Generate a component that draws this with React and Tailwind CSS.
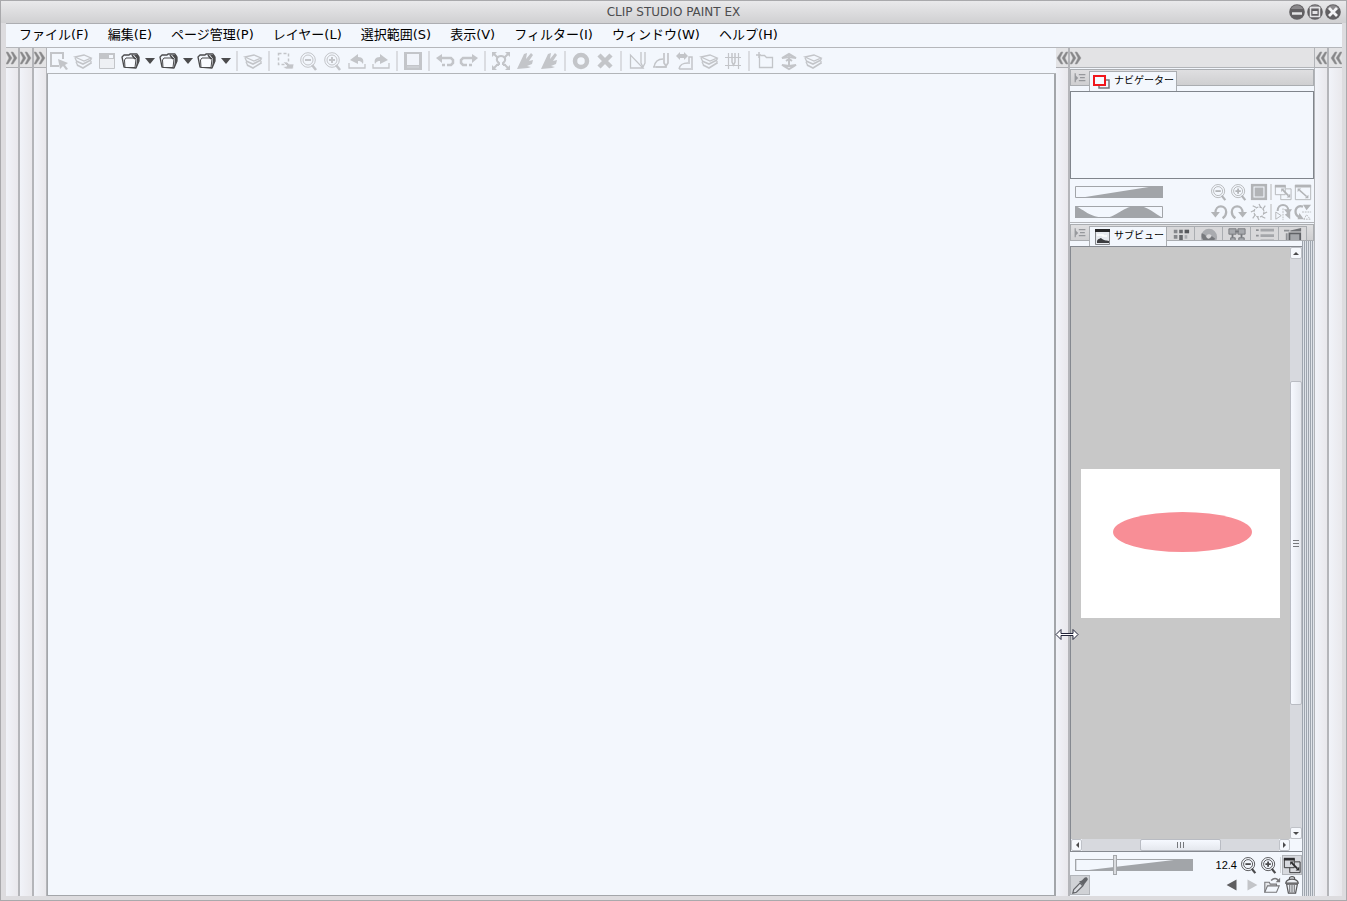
import { useState } from 'react'

const MENUS = [
  'ファイル(F)', '編集(E)', 'ページ管理(P)', 'レイヤー(L)', '選択範囲(S)',
  '表示(V)', 'フィルター(I)', 'ウィンドウ(W)', 'ヘルプ(H)',
]

const TOOLBAR = [
  'select', 'layers', 'window', 'folder*', 'folder*', 'folder*', '|',
  'layers', '|',
  'marquee', 'zoomOut', 'zoomIn', 'rotL', 'rotR', '|',
  'fit', '|',
  'undo', 'redo', '|',
  'transform', 'brush', 'brush', '|',
  'ring', 'cross', '|',
  'ruler', 'curve', 'curveSwap', 'layers', 'grid', '|',
  'newFolder', 'upDown', 'layers',
]

// 20x20 drawings, coloured through currentColor
const ICONS = {
  select: <><path d="M10 15H2V2h12v6" fill="none" stroke="currentColor" strokeWidth="2" /><path d="M9 8l10 4-3 2 3 4-2 1-3-4-3 3z" fill="currentColor" /></>,
  layers: (
    <g fill="none" stroke="currentColor">
      <path d="M2 6l9-2 7 3-7 3z" strokeWidth="1.300" />
      <path d="M3 10l7 3 8-4M4 14l6 3 8-5" strokeWidth="1.600" />
      <path d="M2 7l2 4M3 11l2 4M18 7v2M18 10v3" strokeWidth="1.300" />
    </g>
  ),
  window: <><path d="M2.500 2.500h15v15h-15z" fill="#eef0f4" stroke="currentColor" /><path d="M2 2h16v6H2z" fill="currentColor" /><path d="M12 4h4v3h-4z" fill="#f3f7fd" /></>,
  folder: (
    <>
      <path d="M3 16L1 6l2-2h5l1-1h7l2 3v4l-3 7z" fill="#f3f7fd" stroke="currentColor" strokeWidth="1.300" strokeLinejoin="round" />
      <path d="M15 17l1-9-3-4h4l1 2v4z" fill="currentColor" />
      <path d="M4 16.500L3.500 9 5 7h9l1 1-1 8.500z" fill="#f9fbff" stroke="currentColor" strokeLinejoin="round" />
      <path d="M11 4l3 4" stroke="currentColor" strokeWidth="1.500" />
    </>
  ),
  marquee: <><path d="M3.500 2.500h10v11h-10z" fill="none" stroke="currentColor" strokeWidth="1.500" strokeDasharray="3 2" /><path d="M8 11h4l2 2h5l-1 5h-7l-3-2 4-1z" fill="currentColor" stroke="#f3f7fd" strokeWidth="0.700" /></>,
  zoomOut: <g fill="none" stroke="currentColor"><circle cx="9" cy="9" r="7.300" /><circle cx="9" cy="9" r="5" /><path d="M6 9h6" strokeWidth="2" /><path d="M13 14l4 5" strokeWidth="2.500" /></g>,
  zoomIn: <g fill="none" stroke="currentColor"><circle cx="9" cy="9" r="7.300" /><circle cx="9" cy="9" r="5" /><path d="M6 9h6M9 6v6" strokeWidth="2" /><path d="M13 14l4 5" strokeWidth="2.500" /></g>,
  rotL: <><path d="M2 12v5h16v-4" fill="none" stroke="currentColor" strokeWidth="1.300" /><path d="M3 9l8-6v3c5 0 6 3 5 7-2-3-3-3-5-3v3z" fill="currentColor" /></>,
  rotR: <><path d="M18 12v5H2v-4" fill="none" stroke="currentColor" strokeWidth="1.300" /><path d="M17 9L9 3v3c-5 0-6 3-5 7 2-3 3-3 5-3v3z" fill="currentColor" /></>,
  fit: <><path d="M1 1h18v18H1z" fill="currentColor" /><path d="M4 3h12v11H4z" fill="#f1f4fa" /><path d="M4 16h12" stroke="#d6d9de" /></>,
  undo: <><path d="M6 7h10l2 2v3l-2 2h-4M10 14H7" fill="none" stroke="currentColor" strokeWidth="2.500" /><path d="M7 3v9L1 7z" fill="currentColor" /></>,
  redo: <><path d="M14 7H4L2 9v3l2 2h4M10 14h3" fill="none" stroke="currentColor" strokeWidth="2.500" /><path d="M13 3v9l6-5z" fill="currentColor" /></>,
  transform: (
    <>
      <path d="M8 14H5M12 14h3M8 14v-2C4 9 6 5 10 5s6 4 2 7v2" fill="none" stroke="currentColor" strokeWidth="2" />
      <path d="M3 3l4 4M17 3l-4 4M3 17l4-4M17 17l-4-4" stroke="currentColor" strokeWidth="2" />
      <path d="M1 1h5L1 6zM19 1h-5l5 5zM1 19h5l-5-5zM19 19h-5l5-5z" fill="currentColor" />
    </>
  ),
  brush: <path d="M2 18L9 3l3-1-1 6 5-6 2 2-4 6 4-1-1 4-5 2 4 1-3 1z" fill="currentColor" />,
  ring: <circle cx="10" cy="10" r="6" fill="none" stroke="currentColor" strokeWidth="4.500" />,
  cross: <path d="M4 4l12 12M16 4L4 16" stroke="currentColor" strokeWidth="4.500" />,
  ruler: <g fill="none" stroke="currentColor" strokeWidth="1.300"><path d="M3.500 4v13H16z" /><path d="M14 1v11l2 4 2-4V1" /></g>,
  curve: <><path d="M3 16c1-6 4-8 9-8M2 16h14" fill="none" stroke="currentColor" strokeWidth="1.500" /><path d="M13 2v10l2 3 2-3V2M5 16h10" fill="none" stroke="currentColor" strokeWidth="1.700" /></>,
  curveSwap: <><path d="M1 5l4-4v2h4V1l4 4-4 4V7H5v2z" fill="currentColor" /><path d="M4 18c1-5 4-6 9-6M4 18h14M14 13V6h3v11" fill="none" stroke="currentColor" strokeWidth="1.500" /></>,
  grid: <g fill="none" stroke="currentColor" strokeWidth="1.200"><path d="M5.500 2v16M15.500 2v16M2 6.500h16M2 14.500h16" /><path d="M9 2v9l1.500 3L12 11V2" strokeWidth="1.500" /></g>,
  newFolder: <><path d="M4.500 4v12.500h13v-10h-6l-2-2h-4" fill="none" stroke="currentColor" strokeWidth="1.300" /><path d="M1 4h5M4 1v6" stroke="currentColor" strokeWidth="1.500" /></>,
  upDown: <g fill="none" stroke="currentColor"><path d="M3 7l7-4 7 4-7-1zM3 14l7 4 7-4-7 1z" strokeWidth="2" /><path d="M10 6v8M7 10l3-2 3 2" strokeWidth="2" /></g>,
  square: <><path d="M1 1h18v18H1z" fill="currentColor" /><path d="M4.500 4.500h11v11h-11z" fill="currentColor" stroke="#f3f7fd" strokeWidth="1.200" /></>,
  fitArea: <><path d="M1.500 3h11v10h-11z" fill="none" stroke="currentColor" /><path d="M13 6.500h6v12H7.500V13" fill="none" stroke="currentColor" /><path d="M1 2h12v3H1z" fill="currentColor" /><path d="M10 8l6 6" stroke="currentColor" strokeWidth="2" /><path d="M8 6h4l-4 4zM18 16h-4l4-4z" fill="currentColor" /></>,
  fitWin: <><path d="M1.500 2.500h17v16h-17z" fill="none" stroke="currentColor" /><path d="M1 2h18v3H1z" fill="currentColor" /><path d="M6 8l8 7" stroke="currentColor" strokeWidth="1.700" /><path d="M4 6h4l-4 4zM16 17h-4l4-4z" fill="currentColor" /></>,
  turnL: <><path d="M6 11C6 1 18 2 18 10c0 3-1 5-4 7" fill="none" stroke="currentColor" strokeWidth="2.500" /><path d="M1 10h10l-5 6z" fill="currentColor" /></>,
  turnR: <><path d="M14 11C14 1 2 2 2 10c0 3 1 5 4 7" fill="none" stroke="currentColor" strokeWidth="2.500" /><path d="M19 10H9l5 6z" fill="currentColor" /></>,
  burst: <g fill="none" stroke="currentColor" strokeWidth="1.300"><circle cx="10" cy="10" r="5.500" strokeDasharray="3 1.300" /><path d="M10 1l2 4M17 3l-3 4M19 10l-4 2M17 17l-4-2M10 19l-2-4M3 17l3-4M1 10l4-2M3 3l4 2" /></g>,
  flipH: <><path d="M4 9c0-9 12-9 12 0" fill="none" stroke="currentColor" strokeWidth="2.300" /><path d="M11 7h9l-4 6zM12 13l6-4v9z" fill="currentColor" /><path d="M8 14l-6-4v8z" fill="none" stroke="currentColor" /><path d="M10 6v13" stroke="currentColor" strokeDasharray="2 1" /></>,
  flipV: <><path d="M10 4C1 1-1 12 6 16" fill="none" stroke="currentColor" strokeWidth="2.500" /><path d="M6 11l5 7H4zM10 2h9l-5 6z" fill="currentColor" /><path d="M11 18l3-5 4 5z" fill="none" stroke="currentColor" strokeDasharray="2 1" /><path d="M9 10h10" stroke="currentColor" strokeDasharray="2 1" /></>,
  menu: <><path d="M2 5l5 5-5 5z" fill="currentColor" /><path d="M2 2v15M8 4.500h11M10 9.500h8M8 14.500h11" stroke="currentColor" strokeWidth="2" /></>,
  dropper: <><path d="M2 19l1-4 7-7 3 3-7 7z" fill="#d9dbe0" stroke="currentColor" strokeWidth="1.300" /><path d="M9 6l5 5 1-2 3-4c2-2-1-5-3-3l-3 3z" fill="currentColor" /></>,
  prev: <path d="M15 4v12L4 10z" fill="currentColor" />,
  next: <path d="M5 4v12l11-6z" fill="currentColor" />,
  open: <><path d="M2 18V7h5l1 2h7v3" fill="#e5e7ea" stroke="currentColor" strokeWidth="1.200" /><path d="M2 18l3-7h13l-3 7z" fill="#f3f7fd" stroke="currentColor" strokeWidth="1.200" /><path d="M9 5c3-3 6-3 8 0" fill="none" stroke="currentColor" strokeWidth="1.700" /><path d="M19 2v5h-5z" fill="currentColor" /></>,
  trash: <><path d="M4 9l2 10h8l2-10z" fill="#eceff4" stroke="currentColor" strokeWidth="1.300" /><path d="M3 8c1-6 13-6 14 0zM7 3c0-3 6-3 6 0" fill="#eceff4" stroke="currentColor" strokeWidth="1.300" /><path d="M7.500 10v8M10 10v8M12.500 10v8" stroke="currentColor" /></>,
}

// icons of the tabs hidden behind サブビュー
const TABS = [
  ['カラーセット', <><path d="M2 3h4v4H2zM2 9h4v4H2z" fill="#85878b" /><path d="M8 3h4v4H8zM8 9h4v6H8z" fill="#66686c" /><path d="M14 3h5v4h-5z" fill="#55575b" /><path d="M14 9h3v4h-3z" fill="#aaacb0" /></>],
  ['カラーサークル', <><circle cx="10" cy="11" r="6" fill="none" stroke="#a9abaf" strokeWidth="6" /><path d="M2 7c-2 10 9 13 15 6l-4-3c-3 5-6 3-7-1z" fill="#77797d" /></>],
  ['中間色', <><path d="M1 2h8v6H1zM11 2h8v6h-8zM3 12h5v5H3zM12 12h6v5h-6z" fill="#a7a9ad" stroke="#76787c" /><path d="M5 8v4M8 5h4M15 8v4" stroke="#76787c" strokeWidth="2" /></>],
  ['ヒストリー', <><path d="M0 3.500h3M0 9.500h3M0 15.500h3" stroke="#8e9094" strokeWidth="2" /><path d="M5 3.500h15M5 9.500h15M5 15.500h15" stroke="#a4a6aa" strokeWidth="3" /></>],
  ['オートアクション', <><path d="M0 4h6M3 7v10" stroke="#8e9094" strokeWidth="2" /><path d="M6 7h12v12H6z" fill="#a6a8ac" stroke="#606266" strokeWidth="2" /><path d="M7 4l12-3v4H7z" fill="#707276" /></>],
]

function Icon({ name, className = 'size-[18px]' }) {
  return <svg viewBox="0 0 20 20" className={`shrink-0 ${className}`} aria-hidden="true">{ICONS[name]}</svg>
}

function Chevrons({ flip }) {
  return (
    <svg viewBox="0 0 12 14" className={flip ? 'h-[14px] w-3 rotate-180' : 'h-[14px] w-3'} aria-hidden="true">
      <path d="M0 1h2l4 6-4 6H0l3-6zM5 1h2l4 6-4 6H5l3-6z" fill="#878789" stroke="#9b9b9d" strokeWidth="0.500" />
    </svg>
  )
}

function DockStrip({ flip, label, children, className = 'w-[14px] border-r-2' }) {
  return (
    <div className={`relative flex shrink-0 flex-col border-[#b4b5b9] bg-linear-to-r from-[#f1f3f9] to-[#e9e8ec] ${className}`}>
      <button aria-label={label} className="flex h-5 items-center justify-center border-b border-[#adaeb2] bg-[#e3e3e5]">
        <Chevrons flip={flip} />
      </button>
      {children}
    </div>
  )
}

function ToolButton({ name }) {
  if (name === '|') return <span className="mx-[3px] h-5 border-l-2 border-[#dadce1]" />
  if (name === 'folder*') {
    return (
      <div className="flex text-[#4b4b4d]">
        <button aria-label="folder" className="flex h-6 w-6 items-center justify-center"><Icon name="folder" className="size-5" /></button>
        <button aria-label="folder menu" className="flex h-6 w-[14px] items-center justify-center">
          <svg viewBox="0 0 10 6" className="h-[6px] w-[10px]" aria-hidden="true"><path d="M0 0h10L5 6z" fill="currentColor" /></svg>
        </button>
      </div>
    )
  }
  return (
    <button aria-label={name} className="flex h-6 w-6 items-center justify-center text-[#c3c5c9]">
      <Icon name={name} className="size-5" />
    </button>
  )
}

function PanelButton({ name, className = 'text-[#b2b4b7]' }) {
  return (
    <button aria-label={name} className={`flex h-5 w-5 shrink-0 items-center justify-center ${className}`}>
      <Icon name={name} />
    </button>
  )
}

function PanelSep() {
  return <span className="mx-px h-4 border-l-2 border-[#d5d7da]" />
}

function WedgeSlider({ label, wave, thumb, value, onChange, className }) {
  return (
    <div className={`grid items-center ${className}`}>
      <svg viewBox="0 0 88 12" preserveAspectRatio="none" className="col-start-1 row-start-1 h-3 w-full" aria-hidden="true">
        <path d="M0.500 0.500h87v11h-87z" fill="#f3f7fd" stroke="#a2a5a9" />
        <path
          d={wave ? 'M0 0C10 4 14 11 30 12C44 10 48 0 62 0C73 0 80 8 88 12H0z' : 'M4 12L80 0h8v12z'}
          fill="#a2a5a9"
        />
      </svg>
      <input
        type="range"
        aria-label={label}
        value={value}
        onChange={onChange}
        disabled={!thumb}
        className={thumb
          ? 'col-start-1 row-start-1 m-0 h-5 w-full appearance-none bg-transparent [&::-webkit-slider-thumb]:h-5 [&::-webkit-slider-thumb]:w-1 [&::-webkit-slider-thumb]:appearance-none [&::-webkit-slider-thumb]:border [&::-webkit-slider-thumb]:border-[#a4a7ab] [&::-webkit-slider-thumb]:bg-[#d9dbdf]'
          : 'col-start-1 row-start-1 m-0 h-3 w-full appearance-none bg-transparent [&::-webkit-slider-thumb]:w-0 [&::-webkit-slider-thumb]:appearance-none'}
      />
    </div>
  )
}

function ScrollButton({ label, points, className }) {
  return (
    <button aria-label={label} className={`flex shrink-0 items-center justify-center rounded-[2px] border border-[#bfc2c8] bg-[#f5f8fd] ${className}`}>
      <svg viewBox="0 0 6 6" className="size-[6px]" aria-hidden="true"><path d={points} fill="#4b4b4d" /></svg>
    </button>
  )
}

function MenuTab() {
  return (
    <button aria-label="panel menu" className="flex w-[18px] items-center justify-center text-[#96989c]">
      <Icon name="menu" className="size-3" />
    </button>
  )
}

export default function App() {
  const [navZoom, setNavZoom] = useState(50)
  const [angle, setAngle] = useState(50)
  const [subZoom, setSubZoom] = useState(33)

  return (
    <div className="flex min-h-screen flex-col border border-[#a9a9ac] bg-[#dddcdf] font-['DejaVu_Sans','Noto_Sans_CJK_JP',sans-serif] text-black">
      <header className="flex h-[22px] items-center bg-linear-to-b from-[#e9e9eb] to-[#d0d0d2] px-[5px]">
        <div className="flex-1" />
        <h1 className="text-[12px] leading-5 text-[#4c4c4e]">CLIP STUDIO PAINT EX</h1>
        <div className="flex flex-1 justify-end gap-[2px]">
          {['minimize', 'maximize', 'close'].map(k => (
            <button key={k} aria-label={k} className="size-4">
              <svg viewBox="0 0 16 16" aria-hidden="true">
                <circle cx="8" cy="8" r="7.800" fill="#626063" />
                <path d="M2 5c2-5 10-5 12 0z" fill="#8b898c" />
                {k === 'minimize' && <path d="M3 9.500h10" stroke="#e4e4e6" strokeWidth="2.500" />}
                {k === 'maximize' && <><path d="M3.500 3.500h9v9h-9z" fill="none" stroke="#e4e4e6" strokeWidth="1.500" /><path d="M5.500 7h5v3h-5z" fill="#e4e4e6" /></>}
                {k === 'close' && <path d="M4 4l8 8M12 4l-8 8" stroke="#f4f4f6" strokeWidth="2.800" />}
              </svg>
            </button>
          ))}
        </div>
      </header>

      <div className="mr-1 mb-1 ml-[5px] flex flex-1 flex-col border-t border-[#adaeb2] bg-[#f3f7fd]">
        <nav className="flex h-6 items-center gap-[19px] border-b border-[#b5b7bb] px-[13px] pb-px text-[13px] leading-5 whitespace-nowrap">
          {MENUS.map(m => <button key={m}>{m}</button>)}
        </nav>

        <div className="flex flex-1">
          <DockStrip label="open dock 1" />
          <DockStrip label="open dock 2" />
          <DockStrip label="open dock 3" className="w-[13px] border-r" />

          <main className="flex min-w-0 flex-1 flex-col">
            <div className="flex h-[26px] items-center border-b border-[#b2b5b9]">
              {TOOLBAR.map((name, i) => <ToolButton key={i} name={name} />)}
            </div>
            <div className="flex-1 border-r-2 border-b border-l border-[#a3a6aa]" />
          </main>

          <DockStrip flip label="open dock 4">
            <svg viewBox="0 0 24 12" className="absolute top-[580px] -left-px z-10 h-3 w-6" aria-hidden="true">
              <path d="M1 6.500l5-5v4h12v-4l5 5-5 5v-4H6v4z" fill="#fff" stroke="#22243a" />
            </svg>
          </DockStrip>

          <aside className="flex w-[245px] shrink-0 flex-col border-r border-[#b2b4b8]">
            <button aria-label="collapse panels" className="flex h-5 items-center border-b border-[#b2b4b8] bg-[#e3e3e5]">
              <Chevrons />
            </button>

            <section className="flex flex-col">
              <div className="mt-px flex h-[17px] border border-[#aaadb1] bg-linear-to-b from-[#dfdfe1] to-[#cfcfd1] pt-px">
                <MenuTab />
                <button className="flex h-5 w-[88px] items-start gap-[3px] border-x border-t border-[#aaadb1] bg-[#f3f7fd] pl-[3px] text-[10px] leading-[18px] whitespace-nowrap">
                  <svg viewBox="0 0 18 16" className="mt-[3px] h-4 w-[18px] shrink-0" aria-hidden="true">
                    <path d="M6 5h10v8H6z" fill="none" stroke="#77797d" strokeWidth="1.500" />
                    <path d="M1 1h11v9H1z" fill="#f7faff" stroke="#f0161c" strokeWidth="2" />
                  </svg>
                  ナビゲーター
                </button>
              </div>
              <div className="mt-[5px] h-[88px] border border-[#80858c]" />
              <div className="flex flex-col pt-[3px] pr-px">
                <div className="flex items-center pl-[5px]">
                  <WedgeSlider label="zoom" value={navZoom} onChange={e => setNavZoom(e.target.value)} className="mr-auto w-[88px]" />
                  <PanelButton name="zoomOut" />
                  <PanelButton name="zoomIn" />
                  <PanelButton name="square" />
                  <PanelSep />
                  <PanelButton name="fitArea" />
                  <PanelButton name="fitWin" />
                </div>
                <div className="flex items-center pl-[5px]">
                  <WedgeSlider wave label="angle" value={angle} onChange={e => setAngle(e.target.value)} className="mr-auto w-[88px]" />
                  <PanelButton name="turnL" />
                  <PanelButton name="turnR" />
                  <PanelButton name="burst" />
                  <PanelSep />
                  <PanelButton name="flipH" />
                  <PanelButton name="flipV" />
                </div>
              </div>
            </section>

            <section className="flex flex-1 flex-col border-t border-[#b2b4b8]">
              <div className="mt-px flex h-[17px] shrink-0 border border-[#aaadb1] bg-linear-to-b from-[#dfdfe1] to-[#cfcfd1] pt-px">
                <MenuTab />
                <button className="z-10 flex h-5 w-[78px] shrink-0 items-start gap-[3px] border-x border-t border-[#aaadb1] bg-[#f3f7fd] pl-[5px] text-[10px] leading-[18px] whitespace-nowrap">
                  <svg viewBox="0 0 16 16" className="mt-[2px] size-4 shrink-0" aria-hidden="true">
                    <path d="M0.500 0.500h14v15h-14z" fill="#e7eaef" stroke="#85878b" />
                    <path d="M0 0h15v3H0z" fill="#262628" />
                    <path d="M2 13c0-3 2-3 4-4 3 3 5 2 8 3v2H2z" fill="#3c3d40" />
                    <path d="M2 6h6v1h4" fill="none" stroke="#fff" strokeWidth="1.500" />
                  </svg>
                  サブビュー
                </button>
                {TABS.map(([label, art]) => (
                  <button key={label} aria-label={label} className="flex h-[14px] w-7 items-start justify-center overflow-hidden border-t border-r border-[#aaadb1] bg-[#d8d8da]">
                    <svg viewBox="0 0 20 20" className="size-[18px] shrink-0" aria-hidden="true">{art}</svg>
                  </button>
                ))}
              </div>

              <div className="flex flex-1">
                <div className="flex min-w-0 flex-1 flex-col pt-[5px] pb-px">
                  <div className="flex flex-1 flex-col border-t border-b border-l border-[#858990]">
                    <div className="flex flex-1">
                      <div className="flex flex-1 items-center justify-center bg-[#c8c8c8]">
                        <svg viewBox="0 0 199 149" className="h-[149px] w-[199px]" role="img" aria-label="サブビュー画像">
                          <path d="M0 0h199v149H0z" fill="#fff" />
                          <ellipse cx="101.500" cy="63" rx="69.500" ry="20" fill="#f88e96" />
                        </svg>
                      </div>
                      <div className="flex w-3 flex-col bg-[#d7d9de]">
                        <ScrollButton label="scroll up" points="M0 5h6L3 2z" className="h-3" />
                        <div className="flex flex-1 flex-col justify-center">
                          <div className="flex h-[57%] flex-col items-center justify-center gap-[2px] rounded-[2px] border border-[#b9bcc3] bg-linear-to-r from-[#f6f9ff] to-[#e5e8ee]">
                            <span className="h-px w-[6px] bg-[#77797d]" />
                            <span className="h-px w-[6px] bg-[#77797d]" />
                            <span className="h-px w-[6px] bg-[#77797d]" />
                          </div>
                        </div>
                        <ScrollButton label="scroll down" points="M0 2h6L3 5z" className="h-3" />
                      </div>
                    </div>
                    <div className="flex h-3 pr-3">
                      <ScrollButton label="scroll left" points="M5 0v6L2 3z" className="w-[11px]" />
                      <div className="flex flex-1 justify-center bg-[#d7d9de]">
                        <div className="flex w-[41%] items-center justify-center gap-[2px] rounded-[2px] border border-[#b9bcc3] bg-linear-to-b from-[#f6f9ff] to-[#e5e8ee]">
                          <span className="h-[6px] w-px bg-[#77797d]" />
                          <span className="h-[6px] w-px bg-[#77797d]" />
                          <span className="h-[6px] w-px bg-[#77797d]" />
                        </div>
                      </div>
                      <ScrollButton label="scroll right" points="M1 0v6l3-3z" className="w-[11px]" />
                    </div>
                  </div>

                  <div className="flex items-center pt-[3px] pl-[5px]">
                    <WedgeSlider thumb label="sub view zoom" value={subZoom} onChange={e => setSubZoom(e.target.value)} className="mr-auto w-[118px]" />
                    <output className="pr-[2px] font-['Liberation_Sans',sans-serif] text-[11px] leading-4">12.4</output>
                    <PanelButton name="zoomOut" className="text-[#4b4b4d]" />
                    <PanelButton name="zoomIn" className="text-[#4b4b4d]" />
                    <span className="mx-px h-4 border-l border-[#d5d7da]" />
                    <PanelButton name="fitArea" className="border border-[#b2b5ba] bg-[#d7d9de] text-[#2c2c2e]" />
                  </div>
                  <div className="flex items-center">
                    <PanelButton name="dropper" className="mr-auto border border-[#b2b5ba] bg-[#d0d2d6] text-[#626468]" />
                    <PanelButton name="prev" className="text-[#5e5e60]" />
                    <PanelButton name="next" className="text-[#c3c5c9]" />
                    <PanelButton name="open" className="text-[#77777a]" />
                    <PanelButton name="trash" className="text-[#555557]" />
                  </div>
                </div>
                <div className="w-3 bg-[repeating-linear-gradient(to_right,#9ea5ae_0,#9ea5ae_1px,#dfe3e9_1px,#dfe3e9_2px)]" />
              </div>
            </section>
          </aside>

          <DockStrip flip label="open dock 5" />
          <DockStrip flip label="open dock 6" className="w-[13px]" />
        </div>
      </div>
    </div>
  )
}
